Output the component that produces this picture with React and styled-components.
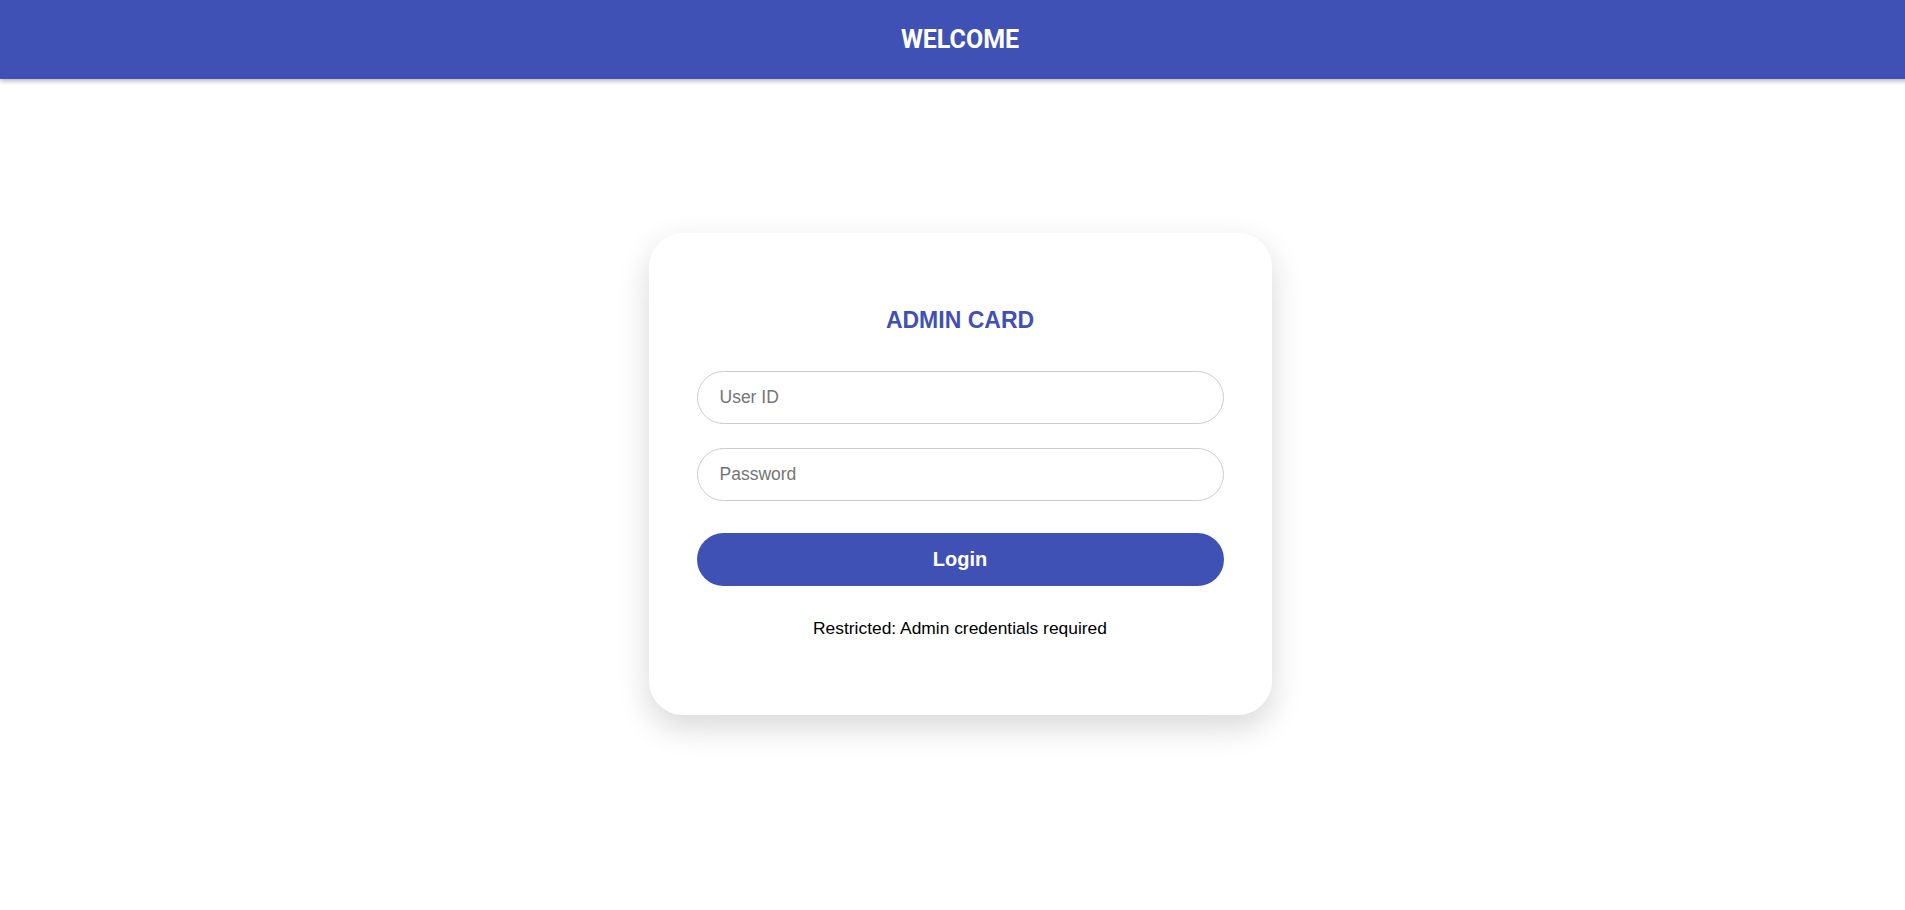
import React from 'react';
import styled, { createGlobalStyle } from 'styled-components';

const GlobalStyle = createGlobalStyle`
  html, body {
    margin: 0;
    padding: 0;
    background: #ffffff;
    overflow-x: hidden;
  }
  * {
    box-sizing: border-box;
  }
`;

const Page = styled.div`
  width: 1920px;
  min-height: 910px;
  font-family: "Liberation Sans", Arial, sans-serif;
`;

const Header = styled.header`
  height: 79px;
  background: #3f51b5;
  display: flex;
  align-items: center;
  justify-content: center;
  box-shadow: 0 2px 5px rgba(0, 0, 0, 0.3);
`;

const HeaderTitle = styled.h1`
  margin: 0;
  color: #ffffff;
  font-family: Roboto, "Liberation Sans", sans-serif;
  font-size: 25px;
  font-weight: 700;
`;

const Main = styled.main`
  display: flex;
  justify-content: center;
  padding-top: 154px;
`;

const Card = styled.div`
  width: 623px;
  background: #ffffff;
  border-radius: 34px;
  padding: 48px;
  display: flex;
  flex-direction: column;
  box-shadow: 0 12px 32px rgba(0, 0, 0, 0.16);
`;

const CardTitle = styled.h2`
  margin: 26px 0 37px;
  text-align: center;
  color: #3f51b5;
  font-size: 23px;
  font-weight: 700;
`;

const Field = styled.input`
  width: 100%;
  height: 53px;
  padding: 0 22px;
  border: 1px solid #cccccc;
  border-radius: 27px;
  font-family: "Liberation Sans", Arial, sans-serif;
  font-size: 17.5px;
  color: #222;
  outline: none;
  margin-bottom: ${({ $gap }) => $gap}px;

  &::placeholder {
    color: #757575;
  }
`;

const LoginButton = styled.button`
  width: 100%;
  height: 53px;
  border: none;
  border-radius: 27px;
  background: #3f51b5;
  color: #ffffff;
  font-family: "Liberation Sans", Arial, sans-serif;
  font-size: 20px;
  font-weight: 700;
  cursor: pointer;
`;

const Note = styled.p`
  margin: 32px 0 28px;
  text-align: center;
  color: #000000;
  font-size: 17.4px;
`;

const App = () => {
  return (
    <Page>
      <GlobalStyle />
      <Header>
        <HeaderTitle>WELCOME</HeaderTitle>
      </Header>
      <Main>
        <Card>
          <CardTitle>ADMIN CARD</CardTitle>
          <Field type="text" placeholder="User ID" $gap={24} autoFocus />
          <Field type="password" placeholder="Password" $gap={32} />
          <LoginButton>Login</LoginButton>
          <Note>Restricted: Admin credentials required</Note>
        </Card>
      </Main>
    </Page>
  );
};

export default App;
